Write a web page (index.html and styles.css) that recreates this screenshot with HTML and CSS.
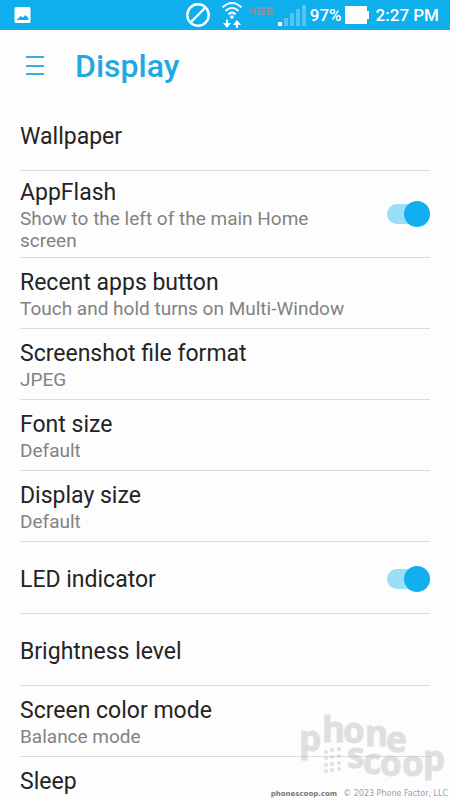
FILE: index.html
```html
<!DOCTYPE html>
<html lang="en">
<head>
<meta charset="utf-8">
<meta name="viewport" content="width=device-width, initial-scale=1">
<title>Display</title>
<link rel="stylesheet" href="styles.css">
</head>
<body>
<div class="screen">
  <div class="status-bar">
    <svg class="status-picture" width="18" height="18" viewBox="0 0 18 18" aria-hidden="true">
      <path fill="#fff" fill-rule="evenodd" d="M3 1h13a1.500 1.500 0 0 1 1.500 1.500v13a1.500 1.500 0 0 1-1.500 1.500H3a1.500 1.500 0 0 1-1.500-1.500v-13A1.500 1.500 0 0 1 3 1zm1 13h11.500v-2l-3-3-2.500 2.500-2.500-1.500-2 2.500-1.500.5z"/>
    </svg>
    <div class="status-right">
      <svg width="26" height="26" viewBox="0 0 26 26" fill="none" stroke="#fff" stroke-width="2.4" aria-hidden="true">
        <circle cx="13" cy="13" r="10.7"/><path d="M5.500 20.500l15-15"/>
      </svg>
      <svg class="status-wifi" width="24" height="28" viewBox="0 0 24 28" fill="none" stroke="#fff" stroke-width="2" aria-hidden="true">
        <path d="M2.500 6.500q9.500-9 19 0M5.500 10q6.500-6.500 13 0M8.500 13.500q3.500-4 7 0"/>
        <circle cx="12" cy="16" r="1.800" fill="#fff" stroke="none"/>
        <path d="M7 18.500v5M17 27v-5"/>
        <path fill="#fff" stroke="none" d="M3 22h8l-4 5zM13 24h8l-4-5z"/>
      </svg>
      <svg class="status-lte" width="28" height="10" viewBox="0 0 28 10" fill="none" stroke="#7f94a6" stroke-width="2" aria-hidden="true">
        <path d="M2 1v4h6M7 1v8M17 2h-6v6h5V5h-3M18 2h8M20 2v6h6M20 5h5"/>
      </svg>
      <svg class="status-signal" width="30" height="24" viewBox="0 0 30 24" fill="#54c5f3" aria-hidden="true">
        <path fill="#fff" d="M1 19h4v4H1z"/><path d="M7 15h4v8H7zM13 10h4v13h-4zM19 6h4v17h-4zM25 2h4v21h-4z"/>
      </svg>
      <span class="battery-level">97%</span>
      <svg class="battery" width="26" height="20" viewBox="0 0 26 20" fill="#fff" aria-hidden="true"><path d="M1 1h22v5h2v8h-2v5H1z"/></svg>
      <time>2:27 PM</time>
    </div>
  </div>

  <header class="app-bar">
    <button class="menu-button" type="button" aria-label="Menu"><svg width="18" height="20" viewBox="0 0 18 20" stroke="#35aee2" stroke-width="2" aria-hidden="true"><path d="M0 1h18M0 10h18M0 18h18"/></svg></button>
    <h1>Display</h1>
  </header>

  <main class="settings">
    <div class="row single"><h2>Wallpaper</h2></div>
    <div class="row tall">
      <label class="row-text" for="appflash"><span class="title">AppFlash</span><span class="summary">Show to the left of the main Home screen</span></label>
      <input class="switch" id="appflash" type="checkbox" checked>
    </div>
    <div class="row"><h2>Recent apps button</h2><p>Touch and hold turns on Multi-Window</p></div>
    <div class="row"><h2>Screenshot file format</h2><p>JPEG</p></div>
    <div class="row"><h2>Font size</h2><p>Default</p></div>
    <div class="row"><h2>Display size</h2><p>Default</p></div>
    <div class="row single">
      <label class="row-text" for="led"><span class="title">LED indicator</span></label>
      <input class="switch" id="led" type="checkbox" checked>
    </div>
    <div class="row single"><h2>Brightness level</h2></div>
    <div class="row"><h2>Screen color mode</h2><p>Balance mode</p></div>
    <div class="row"><h2>Sleep</h2></div>
  </main>

  <div class="watermark">
    <svg width="150" height="78" viewBox="298 710 150 78" aria-hidden="true">
      <g class="logo">
        <text x="299 322 343 365 386" y="751 742 743 746 752">phone</text>
        <text x="347 363 380 402 423" y="768 774 776 776 771">scoop</text>
        <circle cx="326" cy="752" r="2"/><circle cx="332" cy="750" r="2"/><circle cx="339" cy="749" r="2"/>
        <circle cx="326" cy="758" r="2"/><circle cx="332" cy="757" r="2"/><circle cx="339" cy="756" r="2"/>
        <circle cx="326" cy="765" r="2"/><circle cx="332" cy="764" r="2"/><circle cx="339" cy="763" r="2"/>
        <circle cx="326" cy="771" r="2"/><circle cx="332" cy="770" r="2"/><circle cx="339" cy="769" r="2"/>
      </g>
    </svg>
    <div class="credit"><b>phonescoop.com</b><span>© 2023 Phone Factor, LLC</span></div>
  </div>
</div>
</body>
</html>
```
FILE: styles.css
```css
* { box-sizing: border-box; }
body {
  margin: 0;
  background: #fdfdfd;
  color: #242424;
  font-family: Roboto, "Liberation Sans", sans-serif;
}
.screen {
  position: relative;
  height: 100vh;
  overflow: hidden;
}
.status-bar {
  display: flex;
  justify-content: space-between;
  align-items: center;
  height: 30px;
  padding: 0 11px 0 13px;
  background: #0fafed;
  color: #fff;
  font-size: 17px;
  font-weight: 500;
  line-height: 32px;
}
.status-right { display: flex; align-items: center; }
.status-right time { margin-left: 6px; }
.status-wifi { margin-left: 9px; }
.status-lte { margin: 0 0 8px 4px; }
.status-signal { margin: 0 3px 0 1px; }
.battery { margin-left: 2px; }
.app-bar {
  display: flex;
  align-items: center;
  height: 69px;
  padding: 2px 26px 0;
}
.menu-button {
  display: flex;
  padding: 0;
  border: 0;
  background: none;
}
h1 {
  margin: 0 0 0 31px;
  color: #1ea9e1;
  font-size: 32px;
  font-weight: 500;
  line-height: 40px;
}
.settings { padding: 0 20px; }
.row {
  height: 71px;
  padding-top: 11px;
  border-bottom: 1px solid #dcdcdc;
}
.row.single {
  display: flex;
  align-items: center;
  justify-content: space-between;
  height: 72px;
  padding-top: 4px;
}
.row.tall {
  display: flex;
  align-items: center;
  justify-content: space-between;
  height: 87px;
  padding-top: 2px;
}
.row-text { flex: 0 1 310px; }
h2, .title {
  display: block;
  margin: 0;
  font-size: 23px;
  font-weight: 400;
  line-height: 28px;
}
.row p, .summary {
  display: block;
  margin: 0;
  color: #828282;
  font-size: 19px;
  line-height: 22px;
}
.row p, .title + .summary { padding-top: 1px; }
.switch {
  appearance: none;
  display: flex;
  justify-content: flex-end;
  align-items: center;
  width: 43px;
  height: 20px;
  margin: 0 0 2px;
  background: #9adef7;
  border-radius: 10px;
}
.switch::before {
  content: "";
  flex: none;
  width: 26px;
  height: 26px;
  border-radius: 50%;
  background: #12aeef;
}
.watermark {
  position: absolute;
  right: 2px;
  bottom: 0;
  display: flex;
  flex-direction: column;
  align-items: flex-end;
}
.watermark svg { display: block; }
.logo {
  fill: #b4b4b4;
  stroke: #b4b4b4;
  stroke-width: 1px;
  opacity: 0.4;
  font-family: "Open Sans", sans-serif;
  font-size: 35px;
  font-weight: 700;
}
.logo circle { stroke: none; }
.credit {
  display: flex;
  gap: 6px;
  color: #a0a0a0;
  font-family: "DejaVu Sans", sans-serif;
  font-size: 8px;
  line-height: 12px;
}
.credit b {
  color: #777;
  font-size: 7px;
}
```
